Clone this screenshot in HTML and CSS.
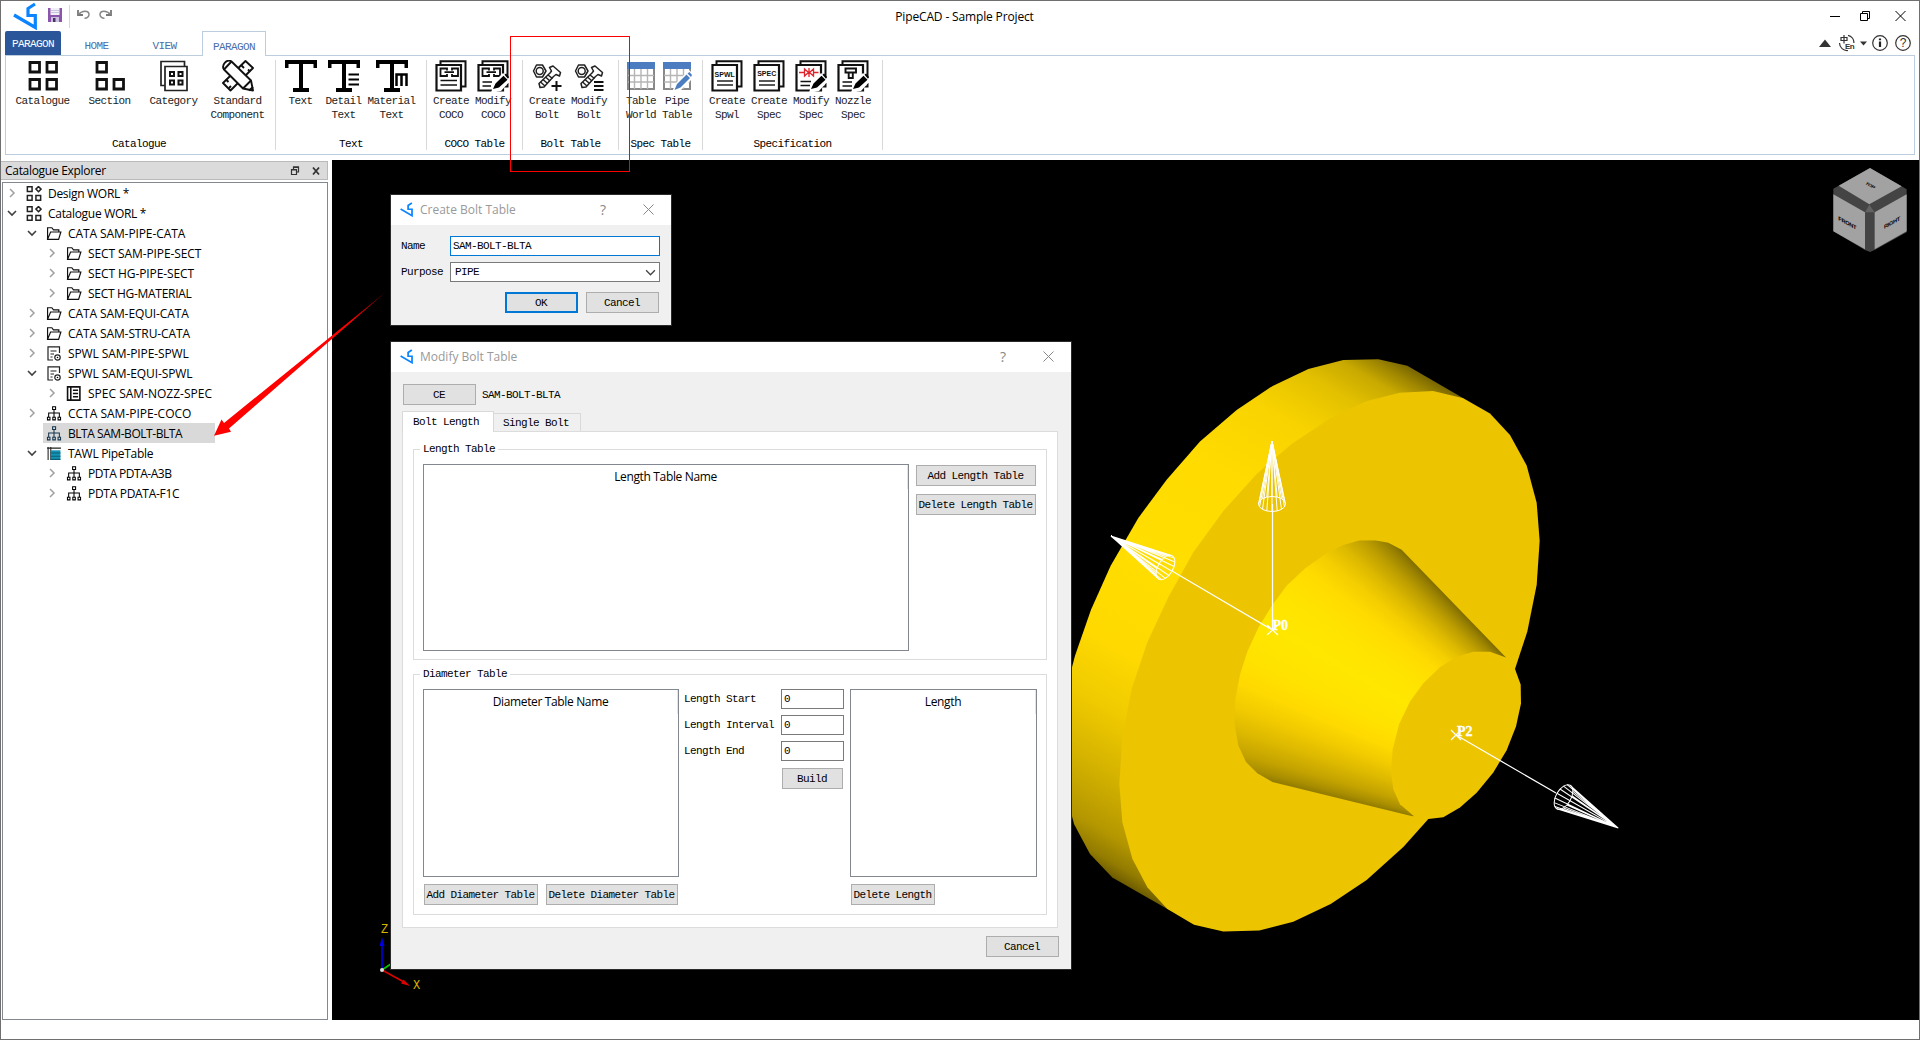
FILE: index.html
```html
<!DOCTYPE html>
<html lang="en">
<head>
<meta charset="utf-8">
<title>PipeCAD - Sample Project</title>
<link rel="stylesheet" href="styles.css">
</head>
<body>
<svg class="defs" width="0" height="0">
  <defs>
    <symbol id="logo" viewBox="0 0 24 28"><path d="M22 2 15 6.500V13.500H22.300V25.500L1 13" fill="none" stroke="#0a84ff" stroke-width="3.200"/></symbol>
    <symbol id="chev-r" viewBox="0 0 10 10"><path d="M3 1 7 5 3 9" fill="none" stroke="#a0a0a0" stroke-width="1.500"/></symbol>
    <symbol id="chev-d" viewBox="0 0 10 10"><path d="M1 3 5 7 9 3" fill="none" stroke="#404040" stroke-width="1.600"/></symbol>
    <symbol id="t-world" viewBox="0 0 14 14"><path d="M.8.800H5.200V5.200H.8ZM.8 8.800H5.200V13.200H.8ZM8.800 8.800H13.200V13.200H8.800ZM11.200.5 13.600 2.900 11.200 5.300 8.800 2.900Z" fill="none" stroke="#222" stroke-width="1.400"/></symbol>
    <symbol id="t-folder" viewBox="0 0 14 14"><path d="M1 12.500V1.600H5L6.500 3.600H11.500V5.600M1 12.500 3.800 5.600H13.400L11.300 12.500Z" fill="none" stroke="#111" stroke-width="1.100"/></symbol>
    <symbol id="t-spwl" viewBox="0 0 14 15"><path d="M6 14H1V.8H12.500V7M3.500 5H9.500M3.500 8H7M3.500 11H5.500" fill="none" stroke="#222" stroke-width="1.200"/><circle cx="10.500" cy="11.500" r="2.700" fill="none" stroke="#222" stroke-width="1.200"/><circle cx="10.500" cy="11.500" r=".8"/></symbol>
    <symbol id="t-spec" viewBox="0 0 14 14"><path d="M1 .8H12.500V13.200H1ZM4 .8V13.200M6 4H10.800M6 7H10.800M6 10H10.800" fill="none" stroke="#111" stroke-width="1.500"/></symbol>
    <symbol id="t-tree" viewBox="0 0 16 16"><path d="M6.500.700H9.700V3.700H6.500ZM8 4V12M2.300 12V7.500H13.700V12M1 12H3.700V14.800H1ZM6.700 12H9.400V14.800H6.700ZM12.300 12H15V14.800H12.300Z" fill="none" stroke="currentColor" stroke-width="1.100"/></symbol>
    <symbol id="t-tawl" viewBox="0 0 14 14"><path d="M.5 2H13.500M1.500 1V13M4 1V13" stroke="#222" fill="none"/><path d="M4 4H13V13H4Z" fill="#1593b5"/><path d="M4 6.500H13M4 9.500H13M4 12.500H13" stroke="#0b6079"/></symbol>
    <symbol id="i-cat" viewBox="0 0 32 32"><path d="M3 2.500H12.500V12H3ZM20 2.500H29.500V12H20ZM3 19.500H12.500V29H3ZM20 19.500H29.500V29H20Z" fill="none" stroke="#111" stroke-width="2.800"/></symbol>
    <symbol id="i-sec" viewBox="0 0 32 32"><path d="M3 2.500H12.500V12H3ZM3 19.500H12.500V29H3ZM20 19.500H29.500V29H20Z" fill="none" stroke="#111" stroke-width="2.800"/></symbol>
    <symbol id="i-categ" viewBox="0 0 32 32"><path d="M7 25.500H3V1.500H26.500V6M7 6.500H29V30.500H7Z" fill="none" stroke="#222" stroke-width="1.700"/><path d="M12 12H16V16H12ZM20.500 12H24.500V16H20.500ZM12 20.500H16V24.500H12ZM20.500 20.500H24.500V24.500H20.500Z" fill="none" stroke="#111" stroke-width="2"/></symbol>
    <symbol id="i-std" viewBox="0 0 32 32"><g fill="#fff" stroke="#111" stroke-width="1.900" stroke-linejoin="round"><path d="M23.500 1 31 8 8.500 30.500 1 23Z"/><path d="M19.500 5.500 22 8M26 9.500 28 11.500M4 19.500 6.500 22M7 28 9 26" /><path d="M2 9.500C-1 5 5-1.500 9.500 1.500L29 20.500 31 30.500 21 28.500Z"/><path d="M9.500 1.500 2 9.500M21 28.500 29 20.500M27 30.500 31 27" fill="none"/></g></symbol>
    <symbol id="i-text" viewBox="0 0 32 32"><path d="M0 0H32V8H28.500V4H18V28H24V32H8V28H14V4H3.500V8H0Z"/></symbol>
    <symbol id="i-dtext" viewBox="0 0 32 32"><path d="M0 0H32V8H28.500V4H18V28H24V32H8V28H14V4H3.500V8H0Z"/><path d="M19 12H32V32H19Z" fill="#fff"/><path d="M20.500 14.500H31M20.500 19.500H31M20.500 24.500H31" stroke="#000" stroke-width="2.200"/><path d="M8 28H24V32H8Z"/></symbol>
    <symbol id="i-mtext" viewBox="0 0 32 32"><path d="M0 0H32V8H28.500V4H18V28H24V32H8V28H14V4H3.500V8H0Z"/><path d="M18.500 12H32V27H18.500Z" fill="#fff"/><path d="M20.500 26V14.500H30.500V26M25.500 14.500V26" stroke="#000" stroke-width="2.500" fill="none"/></symbol>
    <symbol id="pages" viewBox="0 0 32 32"><path d="M5.500 4V1.300H30.500V26.500H27" fill="none" stroke="#111" stroke-width="2"/><path d="M1.500 5H26V30.500H1.500Z" fill="#fff" stroke="#111" stroke-width="2.200"/></symbol>
    <symbol id="pen" viewBox="0 0 32 32"><path d="M14 33 17 22 26 13 34 20 24 31Z" fill="#fff"/><path d="M16 29 18.500 23.500 26.500 15.800 30.500 19.800 22 27.500ZM27.500 14.700 29 13.500 32 17 31 18.700Z"/></symbol>
    <symbol id="i-coco" viewBox="0 0 32 32"><use href="#pages"/><path d="M12 10.500V8.500H5.500V16H12V14M17 10.500V8.500H23V16H17V14M9.500 12.200H19" fill="none" stroke="#111" stroke-width="1.800"/><path d="M5.500 20.500H22M5.500 25H22" stroke="#111" stroke-width="1.600"/></symbol>
    <symbol id="i-mcoco" viewBox="0 0 32 32"><use href="#pages"/><path d="M12 10.500V8.500H5.500V16H12V14M17 10.500V8.500H23V16H17V14M9.500 12.200H19" fill="none" stroke="#111" stroke-width="1.800"/><path d="M5.500 22H15M5.500 26H14" stroke="#111" stroke-width="1.600"/><use href="#pen"/></symbol>
    <symbol id="bolt" viewBox="0 0 32 32"><g fill="none" stroke="#222" stroke-width="1.500" stroke-linejoin="round"><path d="M5.500 5H11.500L15 11 11.500 17H5.500L2.500 11Z"/><circle cx="8.700" cy="11" r="3.500"/><path d="M18.500 7.500 22 6 29.500 12.500 28.500 16 25 14.500 22.500 16.500 13 27 9 27.500 8 23.500 19 13 20.500 11Z"/><path d="M9.500 22 14 26M12 19.500 16.500 23.500M14.500 17 19 21M17 15 21.500 18.500"/></g></symbol>
    <symbol id="i-bolt" viewBox="0 0 32 32"><use href="#bolt"/><path d="M25.500 21V31M20.500 26H30.500" stroke="#111" stroke-width="2"/></symbol>
    <symbol id="i-mbolt" viewBox="0 0 32 32"><use href="#bolt"/><path d="M21 22H30.500M21 26H30.500M21 30H30.500" stroke="#111" stroke-width="2.200"/></symbol>
    <symbol id="i-table" viewBox="0 0 32 32"><path d="M3 8H29V29H3Z" fill="#fff" stroke="#888" stroke-width="2"/><path d="M3 15.500H29M3 22H29M9.500 8V29M16 8V29M22.500 8V29" stroke="#b5b5b5" stroke-width="1.400"/><path d="M2 2H30V9H2Z" fill="#4c7dc0"/></symbol>
    <symbol id="i-ptable" viewBox="0 0 32 32"><use href="#i-table"/><path d="M11 32 15 23 28 10 34 16 20 30Z" fill="#fff"/><path d="M13.500 30 16 24 25.500 14.500 29 18 19.500 27.500ZM26.500 13.500 28.500 12 31 15 30 17Z" fill="#4c7dc0"/></symbol>
    <symbol id="i-spwl" viewBox="0 0 32 32"><use href="#pages"/><text x="13.700" y="17" class="glyph">SPWL</text><path d="M6 21H22M6 25H22" stroke="#222" stroke-width="1.500"/></symbol>
    <symbol id="i-spec" viewBox="0 0 32 32"><use href="#pages"/><text x="13.700" y="16" class="glyph">SPEC</text><path d="M6 21H22M6 25H22" stroke="#222" stroke-width="1.500"/></symbol>
    <symbol id="i-mspec" viewBox="0 0 32 32"><use href="#pages"/><path d="M4 12.500H9.500M18.500 12.500H23.500M14 8V17M9.500 9V16L13.500 12.500ZM18.500 9V16L14.500 12.500Z" stroke="#e0242b" stroke-width="1.300" fill="none"/><path d="M5.500 21.500H16M5.500 25.500H15" stroke="#111" stroke-width="1.600"/><use href="#pen"/></symbol>
    <symbol id="i-nozz" viewBox="0 0 32 32"><use href="#pages"/><path d="M8.500 8.500H19V12.500H8.500ZM11.700 12.500H15.800V18H11.700Z" stroke="#111" stroke-width="1.900" fill="none"/><path d="M5.500 22H15M5.500 26H15" stroke="#111" stroke-width="1.600"/><use href="#pen"/></symbol>
    <g id="wire" fill="none" stroke="#fff" stroke-width="1"><ellipse rx="7.500" ry="13.500"/><path d="M7.600 0 63 0 7 5.200M5.400 9.500 63 0 2.900 12.500M0 13.500 63 0-2.900 12.500M-5.400 9.500 63 0-7 5.200M-7.600 0 63 0 7-5.200M5.400-9.500 63 0 2.900-12.500M0-13.500 63 0-2.900-12.500M-5.400-9.500 63 0-7-5.200"/></g>
    <linearGradient id="rim" gradientUnits="userSpaceOnUse" x1="1210" y1="152" x2="492" y2="1571">
      <stop offset="0" stop-color="#786600"/><stop offset=".02" stop-color="#9c8400"/><stop offset=".05" stop-color="#c8a900"/><stop offset=".1" stop-color="#e3c000"/><stop offset=".18" stop-color="#f8d300"/><stop offset=".31" stop-color="#ffdb00"/><stop offset=".5" stop-color="#ffde00"/><stop offset=".66" stop-color="#ffd900"/><stop offset=".76" stop-color="#efca00"/><stop offset=".86" stop-color="#d2b000"/><stop offset=".94" stop-color="#b49700"/><stop offset=".98" stop-color="#927b00"/><stop offset="1" stop-color="#715f00"/>
    </linearGradient>
    <clipPath id="hub"><path d="M1338 830 1025 548 985 530 945 523 900 523 850 536 795 560 735 597 680 642 635 695 595 752 562 815 540 875 526 940 523 1000 535 1060 558 1103 592 1132 637 1155 1060 1245 1200 1150Z"/></clipPath>
    <linearGradient id="fade" gradientUnits="userSpaceOnUse" x1="387" y1="291" x2="350" y2="322"><stop offset="0" stop-color="#f00" stop-opacity=".4"/><stop offset="1" stop-color="#f00"/></linearGradient>
  </defs>
</svg>

<div class="window">
  <header class="titlebar">
    <div class="quick">
      <svg class="app-logo"><use href="#logo"/></svg>
      <svg class="save" viewBox="0 0 15 15"><path d="M0 0H14V14H0Z" fill="#8956ac"/><path d="M2.500 0H11.500V7H2.500Z" fill="#f2eef8"/><path d="M3 2.500H11M3 4.500H11" stroke="#c8c8dc"/><path d="M3 9H11V14H3Z" fill="#cabfe0"/><path d="M5 10H7.500V14H5Z" fill="#4a3361"/></svg>
      <span class="vsep"></span>
      <svg class="undo" viewBox="0 0 14 10"><path d="M1 1V6H6" fill="none" stroke="#777" stroke-width="1.800"/><path d="M1.500 5.500C5 1 12 1 12 5.500 12 8 9.500 9.500 7.500 9.300" fill="none" stroke="#888" stroke-width="1.500"/></svg>
      <svg class="redo" viewBox="0 0 14 10"><path d="M13 1V6H8" fill="none" stroke="#777" stroke-width="1.800"/><path d="M12.500 5.500C9 1 2 1 2 5.500 2 8 4.500 9.500 6.500 9.300" fill="none" stroke="#888" stroke-width="1.500"/></svg>
    </div>
    <h1 class="caption">PipeCAD - Sample Project</h1>
    <div class="winctl">
      <svg width="76" height="12" viewBox="0 0 76 12" fill="none" stroke="#000"><path d="M0 6.500H10M30.500 3.500H37.500V10.500H30.500ZM32.500 3.500V1.500H39.500V8.500H37.500M65.500 1 75.500 11M75.500 1 65.500 11"/></svg>
    </div>
  </header>

  <nav class="tabs">
    <button class="tab file">PARAGON</button>
    <button class="tab home">HOME</button>
    <button class="tab view">VIEW</button>
    <button class="tab active">PARAGON</button>
    <svg class="helpers" width="94" height="18" viewBox="0 0 94 18">
      <path d="M0 13 6 5.500 12 13Z" fill="#333"/><path d="M41 7.500H48L44.500 11.500Z" fill="#333"/>
      <g fill="none" stroke="#333" stroke-width="1.200"><path d="M29 1.300A7.600 7.600 0 0 1 35 9M20.500 9A7.600 7.600 0 0 0 29 16.500M22 3.500H28V6.500H22ZM25 1V9.500"/><circle cx="61" cy="9" r="7.300"/><circle cx="84" cy="9" r="7.300"/></g>
      <path d="M61 7.500V13M61 4.500V6.300" stroke="#222" stroke-width="2.200"/>
      <text x="26" y="15" class="h-en">En</text><text x="84" y="13.300" class="h-q">?</text>
    </svg>
  </nav>

  <section class="ribbon">
    <div class="group g-cat"><div class="items">
      <div class="item w73"><svg><use href="#i-cat"/></svg><span>Catalogue</span></div>
      <div class="item w61"><svg><use href="#i-sec"/></svg><span>Section</span></div>
      <div class="item w67"><svg><use href="#i-categ"/></svg><span>Category</span></div>
      <div class="item w61"><svg><use href="#i-std"/></svg><span>Standard<br>Component</span></div>
    </div><div class="glabel">Catalogue</div></div>
    <div class="group g-text"><div class="items">
      <div class="item w49"><svg><use href="#i-text"/></svg><span>Text</span></div>
      <div class="item w37"><svg><use href="#i-dtext"/></svg><span>Detail<br>Text</span></div>
      <div class="item w59"><svg><use href="#i-mtext"/></svg><span>Material<br>Text</span></div>
    </div><div class="glabel">Text</div></div>
    <div class="group g-pair"><div class="items">
      <div class="item w42"><svg><use href="#i-coco"/></svg><span>Create<br>COCO</span></div>
      <div class="item w42"><svg><use href="#i-mcoco"/></svg><span>Modify<br>COCO</span></div>
    </div><div class="glabel">COCO Table</div></div>
    <div class="group g-pair"><div class="items">
      <div class="item w42"><svg><use href="#i-bolt"/></svg><span>Create<br>Bolt</span></div>
      <div class="item w42"><svg><use href="#i-mbolt"/></svg><span>Modify<br>Bolt</span></div>
    </div><div class="glabel">Bolt Table</div></div>
    <div class="group g-tab"><div class="items">
      <div class="item w36"><svg><use href="#i-table"/></svg><span>Table<br>World</span></div>
      <div class="item w36"><svg><use href="#i-ptable"/></svg><span>Pipe<br>Table</span></div>
    </div><div class="glabel">Spec Table</div></div>
    <div class="group g-spec"><div class="items">
      <div class="item w42"><svg><use href="#i-spwl"/></svg><span>Create<br>Spwl</span></div>
      <div class="item w42"><svg><use href="#i-spec"/></svg><span>Create<br>Spec</span></div>
      <div class="item w42"><svg><use href="#i-mspec"/></svg><span>Modify<br>Spec</span></div>
      <div class="item w42"><svg><use href="#i-nozz"/></svg><span>Nozzle<br>Spec</span></div>
    </div><div class="glabel">Specification</div></div>
  </section>

  <main class="work">
    <aside class="explorer">
      <div class="dock-head"><span>Catalogue Explorer</span>
        <svg width="30" height="10" viewBox="0 0 30 10" fill="none" stroke="#333"><path d="M.5 3.500H5.500V8.500H.5ZM2.500 3V.8H7.500V6H6M.5 4H5M2.500 1.500H7.500" stroke-width="1.200"/><path d="M22 1.500 28 8.500M28 1.500 22 8.500" stroke-width="1.800"/></svg>
      </div>
      <ul class="tree">
        <li class="l0"><svg class="chev"><use href="#chev-r"/></svg><svg class="ico"><use href="#t-world"/></svg><span>Design WORL *</span></li>
        <li class="l0"><svg class="chev"><use href="#chev-d"/></svg><svg class="ico"><use href="#t-world"/></svg><span>Catalogue WORL *</span></li>
        <li class="l1 wide"><svg class="chev"><use href="#chev-d"/></svg><svg class="ico"><use href="#t-folder"/></svg><span>CATA SAM-PIPE-CATA</span></li>
        <li class="l2 wide"><svg class="chev"><use href="#chev-r"/></svg><svg class="ico"><use href="#t-folder"/></svg><span>SECT SAM-PIPE-SECT</span></li>
        <li class="l2 wide"><svg class="chev"><use href="#chev-r"/></svg><svg class="ico"><use href="#t-folder"/></svg><span>SECT HG-PIPE-SECT</span></li>
        <li class="l2"><svg class="chev"><use href="#chev-r"/></svg><svg class="ico"><use href="#t-folder"/></svg><span>SECT HG-MATERIAL</span></li>
        <li class="l1 wide"><svg class="chev"><use href="#chev-r"/></svg><svg class="ico"><use href="#t-folder"/></svg><span>CATA SAM-EQUI-CATA</span></li>
        <li class="l1 wide"><svg class="chev"><use href="#chev-r"/></svg><svg class="ico"><use href="#t-folder"/></svg><span>CATA SAM-STRU-CATA</span></li>
        <li class="l1 wide"><svg class="chev"><use href="#chev-r"/></svg><svg class="ico"><use href="#t-spwl"/></svg><span>SPWL SAM-PIPE-SPWL</span></li>
        <li class="l1 wide"><svg class="chev"><use href="#chev-d"/></svg><svg class="ico"><use href="#t-spwl"/></svg><span>SPWL SAM-EQUI-SPWL</span></li>
        <li class="l2 wider"><svg class="chev"><use href="#chev-r"/></svg><svg class="ico"><use href="#t-spec"/></svg><span>SPEC SAM-NOZZ-SPEC</span></li>
        <li class="l1 wider"><svg class="chev"><use href="#chev-r"/></svg><svg class="ico"><use href="#t-tree"/></svg><span>CCTA SAM-PIPE-COCO</span></li>
        <li class="l1 narrow"><svg class="chev"></svg><div class="sel"><svg class="ico"><use href="#t-tree"/></svg><span>BLTA SAM-BOLT-BLTA</span></div></li>
        <li class="l1"><svg class="chev"><use href="#chev-d"/></svg><svg class="ico"><use href="#t-tawl"/></svg><span>TAWL PipeTable</span></li>
        <li class="l2 narrow"><svg class="chev"><use href="#chev-r"/></svg><svg class="ico"><use href="#t-tree"/></svg><span>PDTA PDTA-A3B</span></li>
        <li class="l2"><svg class="chev"><use href="#chev-r"/></svg><svg class="ico"><use href="#t-tree"/></svg><span>PDTA PDATA-F1C</span></li>
      </ul>
    </aside>

    <section class="viewport">
      <svg class="scene" viewBox="332 160 1587 860">
        <g transform="translate(1060 340) scale(.33333 .38265)">
          <path fill="url(#rim)" d="M33 865 45 825 93 705 152 590 205 510 235 465 320 365 420 265 530 183 638 120 745 76 850 52 955 50 1042 67 1210 152 1300 400 322 1487 157 1405 90 1343 42 1265 20 1190Z"/>
          <path fill="#ecc500" d="M1210 152 1119 133 1019 138 918 160 810 205 695 272 590 350 490 447 400 555 325 672 262 790 215 912 187 1040 178 1160 187 1260 217 1356 262 1430 322 1487 402 1528 490 1546 598 1543 700 1520 812 1474 920 1411 1030 1325 1105 1252 1365 860 1402 762 1430 640 1439 525 1430 425 1400 328 1350 248 1290 192Z"/>
          <g clip-path="url(#hub)"><foreignObject x="0" y="0" width="2100" height="1500"><div class="hub-shade"></div></foreignObject></g>
          <path fill="#ecc500" d="M1338 830 1290 815 1240 815 1190 828 1140 855 1090 897 1050 945 1017 1005 998 1070 993 1130 1000 1175 1020 1213 1060 1243 1105 1252 1150 1247 1200 1222 1250 1183 1300 1130 1340 1072 1368 1010 1383 950 1382 900 1365 860Z"/>
        </g>
        <g stroke="#fff" stroke-width="1.200" fill="none"><path d="M1272.500 630V504M1272.500 630 1172 571M1267 625 1278 635M1278 625 1267 635M1456 735 1556 793M1451 730 1461 740M1461 730 1451 740"/></g>
        <use href="#wire" transform="translate(1272 504) rotate(-90)"/>
        <use href="#wire" transform="translate(1165.500 567.500) rotate(210)"/>
        <use href="#wire" transform="translate(1563.500 797) rotate(29.600)"/>
        <text x="1272.500" y="630" class="pt">P0</text><text x="1457" y="736" class="pt">P2</text>
        <g fill="none" stroke-width="1.600"><path d="M382 969V945" stroke="#00d"/><path d="M382 970 393 962.500" stroke="#0c0"/><path d="M382 970 403 981.500" stroke="#d00"/></g>
        <path d="M382 937 384.500 946H379.500Z" fill="#00d"/><path d="M410 986 401 983.500 403.500 979.500Z" fill="#d00"/><circle cx="382" cy="970" r="2" fill="#ddd"/>
        <text x="381" y="933" class="ax">Z</text><text x="413" y="989" class="ax">X</text>
        <g transform="translate(1500 0) scale(.33333)">
          <path d="M1110 504 1205 559 1220 568V697L1124 750 1110 756 1095 750 1000 694V566L1016 557Z" fill="#444"/>
          <path d="M1110 504 1205 559 1108 613 1016 557ZM1000 583 1095 637V748L1000 694ZM1220 583 1124 637V748L1220 694Z" fill="#a2a2a2"/>
          <path d="M1108 614 1124 637H1095Z" fill="#626262"/>
          <text class="cube" transform="matrix(1 .55 0 1 1015 660)">FRONT</text>
          <text class="cube" transform="matrix(1 -.55 0 1 1152 687)">RIGHT</text>
          <text class="cube sm" transform="matrix(.9 .5 -.6 .5 1094 551)">TOP</text>
        </g>
      </svg>

      <form class="dialog create">
        <div class="dlg-title"><svg class="dlg-logo"><use href="#logo"/></svg><span>Create Bolt Table</span><i>?</i><svg class="x" viewBox="0 0 11 11"><path d="M.5.5 10.500 10.500M10.500.5.5 10.500" stroke="#888" fill="none"/></svg></div>
        <div class="create-body">
          <label>Name</label><div class="field focus">SAM-BOLT-BLTA</div>
          <label>Purpose</label><div class="field combo">PIPE<svg viewBox="0 0 10 10"><path d="M1 3 5 7 9 3" fill="none" stroke="#444" stroke-width="1.200"/></svg></div>
          <div class="actions"><button class="btn primary" type="button">OK</button><button class="btn" type="button">Cancel</button></div>
        </div>
      </form>

      <form class="dialog modify">
        <div class="dlg-title"><svg class="dlg-logo"><use href="#logo"/></svg><span>Modify Bolt Table</span><i>?</i><svg class="x" viewBox="0 0 11 11"><path d="M.5.5 10.500 10.500M10.500.5.5 10.500" stroke="#888" fill="none"/></svg></div>
        <div class="mod-body">
          <div class="ce-row"><button class="btn" type="button">CE</button><span>SAM-BOLT-BLTA</span></div>
          <div class="dtabs"><div class="dtab on">Bolt Length</div><div class="dtab">Single Bolt</div></div>
          <div class="pane">
            <fieldset class="box box1"><legend>Length Table</legend>
              <div class="list"><div class="lh">Length Table Name</div></div>
              <div class="col-btns"><button class="btn" type="button">Add Length Table</button><button class="btn" type="button">Delete Length Table</button></div>
            </fieldset>
            <fieldset class="box box2"><legend>Diameter Table</legend>
              <div class="list"><div class="lh">Diameter Table Name</div></div>
              <div class="params">
                <label>Length Start</label><div class="field">0</div>
                <label>Length Interval</label><div class="field">0</div>
                <label>Length End</label><div class="field">0</div>
                <button class="btn build" type="button">Build</button>
              </div>
              <div class="list"><div class="lh">Length</div></div>
              <div class="row-btns"><button class="btn b114" type="button">Add Diameter Table</button><button class="btn b132" type="button">Delete Diameter Table</button></div>
              <button class="btn b84" type="button">Delete Length</button>
            </fieldset>
          </div>
          <div class="foot"><button class="btn" type="button">Cancel</button></div>
        </div>
      </form>
    </section>
  </main>
  <div class="mark"></div>
  <svg class="pointer" viewBox="0 0 1920 1040"><path d="M214 435.700 221.500 419.500 224 423 387 291 229 428.500 231 431.700Z" fill="url(#fade)"/></svg>
</div>
</body>
</html>
```
FILE: styles.css
```css
* { box-sizing: border-box; }
body { margin: 0; background: #fff; color: #000; overflow: hidden; }
.defs { position: absolute; }
button { font: inherit; letter-spacing: inherit; color: inherit; padding: 0; margin: 0; border: 0; background: none; border-radius: 0; white-space: nowrap; }
svg { display: block; flex: none; overflow: visible; }

.window {
  position: relative; width: 1920px; height: 1040px; overflow: hidden;
  border: 1px solid #6f6f6f; background: #fff;
  display: flex; flex-direction: column;
  font-family: "Liberation Mono", monospace; font-size: 11px; letter-spacing: -0.6px;
}

/* title bar */
.titlebar { height: 30px; display: grid; grid-template-columns: 1fr auto 1fr; align-items: center; }
.quick { display: flex; align-items: center; padding-left: 12px; }
.app-logo { width: 24px; height: 28px; }
.save { width: 15px; height: 15px; margin-left: 11px; margin-top: -1px; }
.vsep { width: 1px; height: 23px; background: #d9d9d9; margin: 0 8px 0 6px; }
.undo, .redo { width: 14px; height: 10px; margin-top: -4px; }
.undo { margin-left: -1px; }
.redo { margin-left: 7px; }
.caption { margin: 0 0 0 9px; font: 12px "Open Sans", sans-serif; letter-spacing: -0.15px; }
.winctl { display: flex; justify-content: flex-end; padding-right: 13px; }

/* ribbon tabs */
.tabs { height: 24px; display: flex; align-items: stretch; padding-left: 4px; position: relative; z-index: 1; color: #4a6ea9; }
.tab { height: 24px; padding-top: 5px; text-align: center; }
.tab.file { width: 56px; background: #2b579a; color: #fff; border-radius: 2px 2px 0 0; padding-top: 2px; }
.tab.home { width: 71px; }
.tab.view { width: 65px; margin-right: 5px; }
.tab.active { width: 64px; height: 25px; background: #fff; border: 1px solid #bccddd; border-bottom: 0; }
.helpers { margin: 3px 6px 0 auto; }
.h-en { font: bold 8px "Liberation Sans", sans-serif; letter-spacing: -0.5px; fill: #333; }
.h-q { font: 12px "Liberation Sans", sans-serif; letter-spacing: 0; fill: #333; text-anchor: middle; }

/* ribbon */
.ribbon { height: 100px; margin: 0 4px; border: 1px solid #bccddd; display: flex; flex: none; }
.group { display: flex; flex-direction: column; justify-content: space-between; padding: 4px 0 3px; height: 98px; border-style: solid; border-width: 0 1px 0 0; border-image: linear-gradient(transparent 5px, #d9d9d9 5px, #d9d9d9 93px, transparent 93px) 1; }
.g-cat { width: 270px; }
.g-text { width: 151px; }
.g-pair { width: 96px; padding-left: 3px; }
.g-tab { width: 84px; padding-left: 4px; }
.g-spec { width: 180px; padding-left: 3px; }
.g-cat .glabel, .g-pair .glabel, .g-spec .glabel { padding-right: 3px; }
.g-tab .glabel { padding-right: 4px; }
.items { display: flex; }
.item { display: flex; flex-direction: column; align-items: center; color: #222; line-height: 14px; text-align: center; white-space: nowrap; }
.item svg { width: 32px; height: 32px; margin-bottom: 2px; }
.w73 { width: 73px; } .w61 { width: 61px; } .w67 { width: 67px; } .w49 { width: 49px; }
.w37 { width: 37px; } .w59 { width: 59px; } .w42 { width: 42px; } .w36 { width: 36px; }
.glabel { text-align: center; line-height: 14px; }
.glyph { font: bold 7px "Liberation Sans", sans-serif; letter-spacing: 0; text-anchor: middle; fill: #111; }

/* work area */
.work { flex: none; display: flex; justify-content: space-between; margin-top: 5px; height: 860px; }
.explorer { width: 327px; padding-top: 1px; display: flex; flex-direction: column; gap: 2px; font: 12px "Open Sans", sans-serif; letter-spacing: -0.3px; }
.dock-head { height: 19px; background: #dbdbdb; border: 1px solid #bababa; border-left: 0; display: flex; justify-content: space-between; align-items: center; padding: 0 6px 0 4px; }
.tree { flex: 1; margin: 0 0 0 1px; padding: 0; list-style: none; border: 1px solid #828790; }
.tree li { height: 20px; display: flex; align-items: center; }
.l0 { padding-left: 4px; } .l1 { padding-left: 24px; } .l2 { padding-left: 44px; }
.wide { letter-spacing: -0.1px; }
.wider { letter-spacing: 0; }
.narrow { letter-spacing: -0.45px; }
.chev { width: 10px; height: 10px; }
.ico { width: 16px; height: 15px; margin-left: 9px; margin-right: 6px; }
.sel { display: flex; align-items: center; height: 20px; width: 172px; background: #d9d9d9; margin-left: 6px; color: #14344c; }
.sel .ico { margin-left: 3px; }
.sel span { color: #000; }

.viewport { position: relative; width: 1587px; height: 860px; background: #000; overflow: hidden; }
.scene { width: 1587px; height: 860px; }
.hub-shade { width: 2100px; height: 1500px; background: conic-gradient(from 0deg at 2012.7px 1447.8px, #8a7500 281.8deg, #a88d00 282.7deg, #c4a300 284deg, #dcb800 286deg, #f2cb00 288.3deg, #ffd900 290.5deg, #ffe200 293deg, #ffe700 297deg, #ffe300 300.5deg, #ffdb00 303.6deg, #f4ce00 305.8deg, #dcb800 308deg, #bc9d00 310deg, #9c8400 311.4deg, #7b6800 312.6deg); }
.pt { font: bold 14px "Liberation Serif", serif; letter-spacing: 0; fill: #fff; stroke: #fff; stroke-width: .3px; }
.ax { font: 12px "Liberation Mono", monospace; letter-spacing: 0; fill: #d8b400; }
.cube { font: bold 17px "Liberation Sans", sans-serif; letter-spacing: -1px; fill: #000; }
.cube.sm { font-size: 16px; }

/* dialogs */
.dialog { position: absolute; left: 59px; margin: 0; background: #f0f0f0; outline: 1px solid #2a2a2a; }
.create { top: 35px; width: 280px; height: 130px; }
.modify { top: 182px; width: 680px; height: 627px; }
.dlg-title { height: 30px; background: #fff; display: flex; align-items: center; padding: 0 17px 1px 9px; font: 12px "Open Sans", sans-serif; letter-spacing: 0; color: #999; }
.dlg-logo { width: 13px; height: 15px; margin-right: 7px; }
.dlg-title i { font-style: normal; font-size: 14px; margin-left: auto; color: #888; }
.x { width: 11px; height: 11px; margin-left: 37px; }
.field { height: 20px; border: 1px solid #7a7a7a; background: #fff; line-height: 18px; padding-left: 2px; }
.field.focus { border-color: #0078d7; }
.combo { display: flex; justify-content: space-between; align-items: center; padding: 0 3px 0 4px; }
.combo svg { width: 11px; height: 11px; }
.btn { height: 21px; width: 73px; background: #e1e1e1; border: 1px solid #adadad; text-align: center; line-height: 20px; padding-right: 1px; }
.btn.primary { border: 2px solid #0078d7; line-height: 18px; }
.create-body { display: grid; grid-template-columns: 49px 210px; row-gap: 6px; padding: 11px 10px 0; line-height: 20px; }
.actions { grid-column: 1 / 3; display: flex; justify-content: flex-end; gap: 8px; padding: 4px 1px 0 0; }

.mod-body { padding: 12px 12px 0 11px; display: flex; flex-direction: column; }
.ce-row { display: flex; align-items: center; gap: 6px; padding-left: 1px; }
.dtabs { display: flex; align-items: flex-end; height: 26px; }
.dtab { width: 87px; height: 18px; border: 1px solid #d9d9d9; border-left: 0; border-bottom: 0; text-align: center; line-height: 18px; padding-right: 2px; }
.dtab.on { width: 92px; height: 21px; background: #fff; border-left: 1px solid #d9d9d9; margin-bottom: -1px; position: relative; line-height: 20px; padding-right: 4px; }
.pane { width: 656px; height: 497px; border: 1px solid #dcdcdc; background: #fff; padding: 11px 10px 0; }
.box { margin: 0; border: 1px solid #dcdcdc; padding: 0 9px; width: 634px; min-width: 0; }
.box legend { padding: 0 3px; margin-left: -3px; line-height: 12px; height: 12px; }
.box1 { height: 217px; display: flex; gap: 7px; padding-top: 9px; }
.box1 .list { width: 486px; height: 187px; }
.col-btns { display: flex; flex-direction: column; gap: 8px; padding-top: 1px; }
.col-btns .btn { width: 120px; }
.list { border: 1px solid #828790; background: #fff; }
.lh { height: 24px; border-right: 1px solid #e5e5e5; text-align: center; font: 12px/24px "Open Sans", sans-serif; letter-spacing: -0.35px; }
.box2 { margin-top: 8px; height: 247px; display: grid; grid-template-columns: 256px 159px 187px; grid-template-rows: 188px 21px; column-gap: 6px; row-gap: 7px; padding-top: 9px; }
.params { display: grid; grid-template-columns: 97px 63px; grid-auto-rows: 20px; row-gap: 6px; line-height: 20px; margin-left: -1px; }
.build { grid-column: 2; width: 61px; margin: 1px 0 0 1px; }
.row-btns { display: flex; gap: 8px; padding-left: 1px; grid-column: 1 / 3; }
.b114 { width: 114px; } .b132 { width: 132px; } .b84 { width: 84px; margin-left: 1px; }
.foot { display: flex; justify-content: flex-end; padding-top: 8px; }

/* annotations drawn over the window */
.mark { position: absolute; left: 509px; top: 35px; width: 120px; height: 136px; border: 1px solid #f00; z-index: 2; }
.pointer { position: absolute; left: -1px; top: -1px; width: 1920px; height: 1040px; pointer-events: none; z-index: 2; }
```
